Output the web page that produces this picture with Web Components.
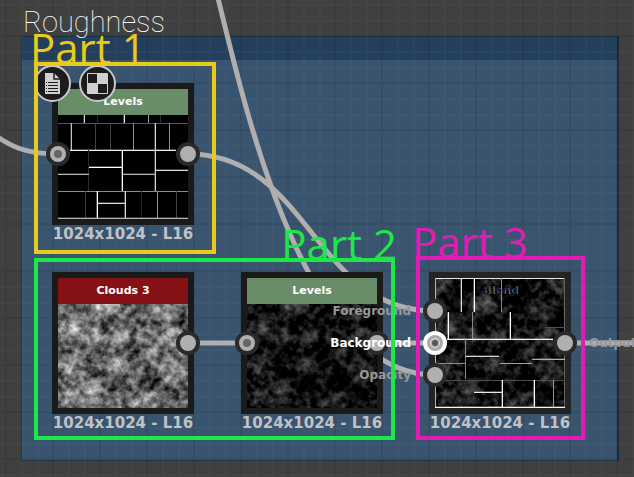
<!DOCTYPE html>
<html lang="en">
<head>
<meta charset="utf-8">
<title>Roughness graph</title>
<style>
  html, body {
    margin: 0;
    height: 100%;
  }

  body {
    background: #404040;
    font-family: "DejaVu Sans", sans-serif;
    overflow: hidden;
  }
</style>
</head>
<body>

<graph-canvas>
  <graph-frame label="Roughness"></graph-frame>
  <graph-wires></graph-wires>

  <graph-node style="left: 52px; top: 83px" title-text="Levels" kind="filter" texture="bricks" inputs="mono" outputs="gray">
    <node-badge slot="badges" icon="doc"></node-badge>
    <node-badge slot="badges" icon="checker"></node-badge>
  </graph-node>
  <graph-node style="left: 52px; top: 272px" title-text="Clouds 3" kind="generator" texture="clouds" outputs="gray"></graph-node>
  <graph-node style="left: 241px; top: 272px" title-text="Levels" kind="filter" texture="dark" inputs="mono" outputs="gray"></graph-node>
  <graph-node style="left: 429px; top: 272px" title-text="Blend" kind="blend" texture="blend" inputs="gray:Foreground,active:Background,gray:Opacity" outputs="gray:Output"></graph-node>

  <part-note style="left: 34px; top: 62px; width: 182px; height: 192px; --tone: #e9cb1c">Part 1</part-note>
  <part-note style="left: 34px; top: 258px; width: 361px; height: 182px; --tone: #1ee845" align="end">Part 2</part-note>
  <part-note style="left: 416px; top: 256px; width: 169px; height: 184px; --tone: #e01cb4">Part 3</part-note>
</graph-canvas>

<script>
/* Light and dark lumps of the cloud noise: x, y, radius, strength */
const LUMPS = [
  [47, 29, 11, .7], [15, 50, 9, .7], [35, 57, 8, .5], [60, 59, 9, .65], [105, 32, 7, .6],
  [115, 57, 9, .7], [92, 72, 9, .45], [60, 89, 9, .6], [34, 114, 9, .75], [14, 117, 7, .6],
  [12, 87, 9, .5], [112, 94, 10, .5], [92, 119, 8, .45], [79, 127, 5, .7], [7, 6, 9, .6],
  [125, 10, 8, .65], [48, 28, 8, .3],
  [50, 45, 9, -.5], [75, 74, 9, -.6], [94, 102, 11, -.6], [60, 105, 9, -.5], [32, 94, 8, -.5],
  [124, 44, 8, -.4], [28, 10, 10, -.5], [80, 12, 12, -.5], [120, 118, 9, -.45], [45, 72, 7, -.35],
  [80, 42, 9, -.3], [8, 68, 6, -.3],
]

/* Brick edges: x1, y1, x2, y2, grey level */
const BRICKS = [
  [26, 26, 26, 34, 210], [66, 26, 66, 34, 240], [90, 26, 90, 34, 150], [39, 26, 39, 34, 45], [102, 26, 102, 34, 45],
  [0, 34, 130, 34, 85],
  [13, 34, 13, 61, 190], [37, 34, 37, 61, 70], [52, 34, 52, 61, 70], [75, 34, 75, 61, 140], [97, 34, 97, 102, 210], [111, 34, 111, 61, 140],
  [12, 61, 118, 61, 240],
  [30, 61, 30, 102, 45], [64, 61, 64, 102, 255],
  [31, 78, 64, 78, 255], [0, 85, 31, 85, 180], [65, 85, 97, 85, 180], [97, 81, 130, 81, 220],
  [0, 102, 130, 102, 140],
  [27, 102, 27, 130, 60], [39, 102, 39, 130, 255], [67, 102, 67, 130, 220], [39, 114, 67, 114, 220],
  [83, 102, 83, 130, 35], [99, 102, 99, 130, 145], [118, 102, 118, 130, 70],
  [0, 129, 130, 129, 180],
]

const BLEND_BRICKS = [
  [0, 0, 130, 0, 230], [0, 0, 0, 130, 180], [129, 0, 129, 130, 100],
  [26, 0, 26, 34, 220], [39, 0, 39, 34, 250], [66, 0, 66, 34, 140],
  [13, 34, 13, 61, 255], [37, 34, 37, 61, 140], [75, 34, 75, 61, 250], [110, 49, 130, 49, 80],
  [12, 61, 118, 61, 240],
  [30, 61, 30, 101, 135], [31, 78, 64, 78, 210], [0, 85, 31, 85, 140], [65, 85, 97, 85, 160], [97, 81, 130, 81, 175],
  [0, 102, 130, 102, 75],
  [67, 102, 67, 130, 245], [99, 102, 99, 130, 250], [118, 102, 118, 130, 145], [39, 114, 67, 114, 230],
  [0, 129, 130, 129, 245],
]

/* One pixel rects stay crisp; a faint twin beside the bright ones thickens them */
const edges = list => list.map(([x1, y1, x2, y2, g]) => {
  const upright = x1 === x2
  const box = (dx, dy) => `x="${x1 + dx}" y="${y1 + dy}" width="${upright ? 1 : x2 - x1}" height="${upright ? y2 - y1 : 1}"`
  const fill = `fill="rgb(${g},${g},${g})"`
  return `<rect ${box(0, 0)} ${fill} />`
    + (g > 170 ? `<rect ${box(upright ? -1 : 0, upright ? 0 : -1)} ${fill} opacity=".3" />` : '')
}).join('')

const noise = (gain, lift) => `
  <filter id="grain" x="0" y="0" width="100%" height="100%" color-interpolation-filters="sRGB">
    <feTurbulence type="fractalNoise" baseFrequency="0.14" numOctaves="4" seed="7" />
    <feColorMatrix values="1.4 0 0 0 -.2  1.4 0 0 0 -.2  1.4 0 0 0 -.2  0 0 0 0 1" result="fine" />
    <feComposite in="SourceGraphic" in2="fine" operator="arithmetic" k1="0" k2=".9" k3=".7" k4="-.35" />
    <feColorMatrix values="${gain} 0 0 0 ${lift}  0 ${gain} 0 0 ${lift}  0 0 ${gain} 0 ${lift}  0 0 0 0 1" />
  </filter>
  <filter id="soft" x="-50%" y="-50%" width="200%" height="200%"><feGaussianBlur stdDeviation="4" /></filter>
  <g filter="url(#grain)">
    <rect width="130" height="130" fill="#707070" />
    ${LUMPS.map(([x, y, r, s]) => `<circle cx="${x}" cy="${y}" r="${r}" filter="url(#soft)"
      fill="${s > 0 ? '#fff' : '#000'}" opacity="${Math.abs(s)}" />`).join('')}
  </g>`

const TEXTURES = {
  bricks: () => edges(BRICKS),
  clouds: () => noise(.95, .02),
  dark:   () => noise(.6, -.18),
  blend:  () => noise(.6, -.18) + edges(BLEND_BRICKS),
}

/* <graph-canvas>: the dark surface that everything is placed on */
class GraphCanvas extends HTMLElement {
  constructor() {
    super()
    this.attachShadow({ mode: 'open' }).innerHTML = /* html */ `
      <style>
        :host {
          display: block;
          position: relative;
          width: 100%;
          height: 100%;
          overflow: hidden;
          background: #404040;
        }
      </style>
      <slot></slot>
    `
  }
}

/* <graph-frame label="…">: titled group box, with the grid showing through */
class GraphFrame extends HTMLElement {
  constructor() {
    super()
    this.attachShadow({ mode: 'open' }).innerHTML = /* html */ `
      <style>
        :host {
          display: block;
          position: absolute;
          inset: 0;
        }

        .frame {
          position: absolute;
          inset: 36px 15px 16px 21px;
          box-sizing: border-box;
          border: 1px solid #1d3349;
          border-right: 2px solid #1b2c3c;
          background: #39546f;
        }

        .bar {
          height: 23px;
          background: #243f5c;
        }

        h2 {
          position: absolute;
          left: 23px;
          top: 5px;
          margin: 0;
          font: 100 29px/34px Roboto, sans-serif;
          color: #fff;
        }

        .grid {
          position: absolute;
          inset: 0;
        }
      </style>
      <div class="frame"><div class="bar"></div></div>
      <svg class="grid" width="100%" height="100%" aria-hidden="true">
        <pattern id="cells" x="5" y="35" width="47" height="47" patternUnits="userSpaceOnUse">
          <path d="M17 0V47M33 0V47M0 17H47M0 33H47" stroke="#fff" stroke-opacity=".025" stroke-width="2" />
          <path d="M1 0V47M0 1H47" stroke="#000" stroke-opacity=".08" stroke-width="2" />
        </pattern>
        <rect width="100%" height="100%" fill="url(#cells)" />
      </svg>
      <h2></h2>
    `
    this.shadowRoot.querySelector('h2').textContent = this.getAttribute('label') ?? ''
  }
}

/* <graph-wires>: links that run between the ports */
class GraphWires extends HTMLElement {
  constructor() {
    super()
    this.attachShadow({ mode: 'open' }).innerHTML = /* html */ `
      <style>
        :host {
          display: block;
          position: absolute;
          inset: 0;
        }
      </style>
      <svg width="100%" height="100%" fill="none" stroke="#b0aeae" stroke-width="5" aria-hidden="true">
        <path d="M-10 132C10 146 24 154 58 154" />
        <path d="M188 154C310 154 313 311 435 311" />
        <path d="M218 -2C250 130 308 375 435 375" />
        <path d="M188 343H247M376 343H435M565 343H2000" />
      </svg>
    `
  }
}

/* <node-badge icon="doc|checker">: round marker on a node's corner */
const BADGES = {
  doc: `
    <path d="M11 8h9l6 6v15H11z" fill="#d0d0d0" />
    <path d="M20 8v6h6" fill="none" stroke="#1c1c1c" stroke-width="1.5" />
    <path d="M12 17.5h1M14 17.5h10M12 20.5h1M14 20.5h10M12 23.5h1M14 23.5h10M12 26.5h1M14 26.5h10" stroke="#1c1c1c" stroke-width="1" />`,
  checker: `
    <rect x="8" y="8" width="21" height="21" rx="1" fill="#d0d0d0" />
    <path d="M9 9h9v9h-9zM19 19h9v9h-9z" fill="#1c1c1c" />`,
}

class NodeBadge extends HTMLElement {
  constructor() {
    super()
    this.attachShadow({ mode: 'open' }).innerHTML = /* html */ `
      <style>
        :host {
          display: block;
          width: 37px;
          height: 37px;
        }

        svg {
          display: block;
        }
      </style>
      <svg width="37" height="37" viewBox="0 0 37 37" aria-hidden="true">
        <circle cx="18.5" cy="18.5" r="17.5" fill="#1c1c1c" stroke="#c8c8c8" stroke-width="2" />
        ${BADGES[this.getAttribute('icon')] ?? ''}
      </svg>
    `
  }
}

/* <node-port kind="gray|mono|active">: connector dot, its label is slotted */
class NodePort extends HTMLElement {
  constructor() {
    super()
    this.attachShadow({ mode: 'open' }).innerHTML = /* html */ `
      <style>
        :host {
          display: flex;
          align-items: center;
          gap: 12px;
          height: 24px;
          font: bold 12px/16px "DejaVu Sans", sans-serif;
          color: #96999c;
        }

        :host([kind="active"]) {
          color: #fff;
        }

        :host([side="in"]) {
          flex-direction: row-reverse;
        }

        svg {
          flex: none;
        }
      </style>
      <svg width="24" height="24" viewBox="0 0 24 24" aria-hidden="true"></svg>
      <slot></slot>
    `
  }

  connectedCallback() {
    const kind = this.getAttribute('kind')
    const svg = this.shadowRoot.querySelector('svg')
    svg.innerHTML = kind === 'active'
      ? `<circle cx="12" cy="12" r="12" fill="#fff" /><circle cx="12" cy="12" r="8" fill="#aaa" />
         <circle cx="12" cy="12" r="4.5" fill="none" stroke="#ddd" stroke-width="1" /><circle cx="12" cy="12" r="3" fill="#555" />`
      : `<circle cx="12" cy="12" r="12" fill="#2a2a2a" /><circle cx="12" cy="12" r="8" fill="#b0b0b0" />
         ${kind === 'mono' ? '<circle cx="12" cy="12" r="4" fill="#666" />' : ''}`
  }
}

/* <graph-node>: thumbnail card with a title, its ports and a format caption */
const nodeTemplate = document.createElement('template')
nodeTemplate.innerHTML = /* html */ `
  <style>
    :host {
      display: block;
      position: absolute;
      width: 142px;
      font-family: "DejaVu Sans", sans-serif;
    }

    .card {
      position: relative;
      box-sizing: border-box;
      padding: 6px;
      height: 142px;
      background: #1a1a1a;
    }

    :host([kind="blend"]) .card {
      background: #242424;
    }

    .face {
      display: grid;
      height: 130px;
      background: #000;
    }

    .face > * {
      grid-area: 1 / 1;
    }

    .thumb {
      display: block;
    }

    .title {
      z-index: 1;
      height: 26px;
      font: bold 11px/26px "DejaVu Sans", sans-serif;
      text-align: center;
      color: #fff;
      background: #6a8d69;
    }

    :host([kind="generator"]) .title {
      background: #861114;
    }

    :host([kind="blend"]) .title {
      color: #101024;
      text-shadow: 1px 0 0 #6d84a0;
      background: none;
    }

    .caption {
      font: bold 15px/18px "DejaVu Sans", sans-serif;
      text-align: center;
      white-space: nowrap;
      color: #c0c2c5;
    }

    .ports {
      position: absolute;
      z-index: 2;
      top: 0;
      bottom: 0;
      display: flex;
      flex-direction: column;
      justify-content: center;
      gap: 8px;
    }

    .in  { right: 124px; }
    .out { left: 124px; }

    .badges {
      position: absolute;
      z-index: 3;
      left: -18px;
      top: -18px;
      display: flex;
      gap: 8px;
    }
  </style>

  <div class="card">
    <div class="face">
      <svg class="thumb" width="130" height="130" viewBox="0 0 130 130" aria-hidden="true"></svg>
      <div class="title"></div>
    </div>
    <div class="ports in"></div>
    <div class="ports out"></div>
    <div class="badges"><slot name="badges"></slot></div>
  </div>
  <div class="caption">1024x1024 - L16</div>
`

class GraphNode extends HTMLElement {
  constructor() {
    super()
    this.attachShadow({ mode: 'open' }).appendChild(nodeTemplate.content.cloneNode(true))
  }

  connectedCallback() {
    const root = this.shadowRoot
    root.querySelector('.title').textContent = this.getAttribute('title-text')
    root.querySelector('.thumb').innerHTML = TEXTURES[this.getAttribute('texture')]()
    this.#addPorts('in', this.getAttribute('inputs'))
    this.#addPorts('out', this.getAttribute('outputs'))
  }

  #addPorts(side, list) {
    if (!list) return
    for (const item of list.split(',')) {
      const [kind, label = ''] = item.split(':')
      const port = document.createElement('node-port')
      port.setAttribute('kind', kind)
      port.setAttribute('side', side)
      port.textContent = label
      this.shadowRoot.querySelector(`.${side}`).appendChild(port)
    }
  }
}

/* <part-note>: coloured outline with its name standing on the top edge */
class PartNote extends HTMLElement {
  constructor() {
    super()
    this.attachShadow({ mode: 'open' }).innerHTML = /* html */ `
      <style>
        :host {
          display: block;
          position: absolute;
          z-index: 5;
          box-sizing: border-box;
          border: 4px solid var(--tone);
          color: var(--tone);
          font: 42px/48px "Open Sans", sans-serif;
        }

        span {
          position: absolute;
          bottom: 100%;
          left: -8px;
          margin-bottom: -6px;
          white-space: nowrap;
        }

        :host([align="end"]) span {
          left: auto;
          right: -6px;
        }
      </style>
      <span><slot></slot></span>
    `
  }
}

customElements.define('graph-canvas', GraphCanvas)
customElements.define('graph-frame', GraphFrame)
customElements.define('graph-wires', GraphWires)
customElements.define('node-badge', NodeBadge)
customElements.define('node-port', NodePort)
customElements.define('graph-node', GraphNode)
customElements.define('part-note', PartNote)
</script>
</body>
</html>
